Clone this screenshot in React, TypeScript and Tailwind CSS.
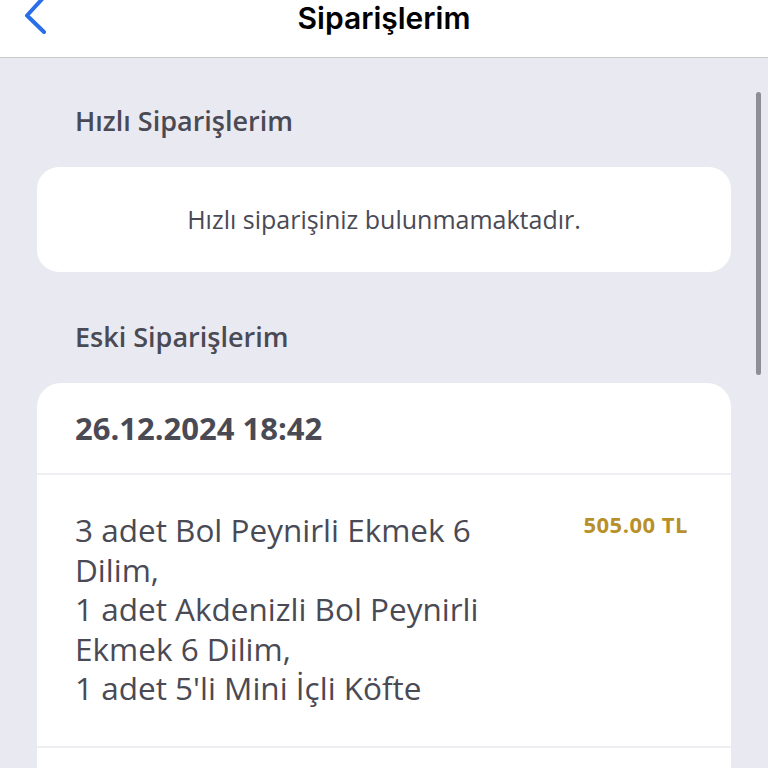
import React from "react";

export default function App() {
  return (
    <div
      className="relative w-[768px] h-[768px] overflow-hidden bg-[#e9e9f1]"
      style={{ fontFamily: "'Open Sans', sans-serif" }}
    >
      <div className="h-[58px] bg-white border-b border-[#c9c9cc] flex items-start justify-center relative">
        <svg
          className="absolute left-[24px] top-[0px]"
          width="26"
          height="36"
          viewBox="0 0 26 36"
          fill="none"
        >
          <path d="M20 -3 L3 15.5 L20 32" stroke="#2a6fea" strokeWidth="4" strokeLinecap="round" strokeLinejoin="round" />
        </svg>
        <div
          className="text-[30px] leading-[36px] text-black font-semibold"
          style={{ fontFamily: "Inter, sans-serif" }}
        >
          Siparişlerim
        </div>
      </div>

      <div className="pl-[37px] pr-[37px] pt-[45px]">
        <div className="pl-[38px] text-[27px] leading-[36px] font-semibold text-[#4a4a55]">Hızlı Siparişlerim</div>
        <div className="mt-[28px] h-[105px] rounded-[22px] bg-white flex items-center justify-center text-[25px] text-[#4a4a55]">
          Hızlı siparişiniz bulunmamaktadır.
        </div>
        <div className="mt-[47px] pl-[38px] text-[27px] leading-[36px] font-semibold text-[#4a4a55]">Eski Siparişlerim</div>
        <div className="mt-[28px] rounded-[24px] bg-white">
          <div className="h-[92px] flex items-center pl-[38px] text-[31px] font-bold text-[#4a4a55] border-b-2 border-[#efeff3]">
            26.12.2024 18:42
          </div>
          <div className="flex pl-[38px] pr-[43px] pt-[35px] pb-[38px] border-b-2 border-[#efeff3]">
            <div className="text-[31.5px] leading-[39.5px] text-[#4a4a55] whitespace-nowrap">
              3 adet Bol Peynirli Ekmek 6
              <br />
              Dilim,
              <br />
              1 adet Akdenizli Bol Peynirli
              <br />
              Ekmek 6 Dilim,
              <br />
              1 adet 5'li Mini İçli Köfte
            </div>
            <div className="ml-auto text-[22px] leading-[28px] font-bold tracking-[0.5px] text-[#b8902a]">505.00 TL</div>
          </div>
          <div className="h-[80px]" />
        </div>
      </div>

      <div className="absolute left-[756px] top-[92px] w-[5px] h-[283px] rounded-full bg-[#8e8e96]" />
    </div>
  );
}
